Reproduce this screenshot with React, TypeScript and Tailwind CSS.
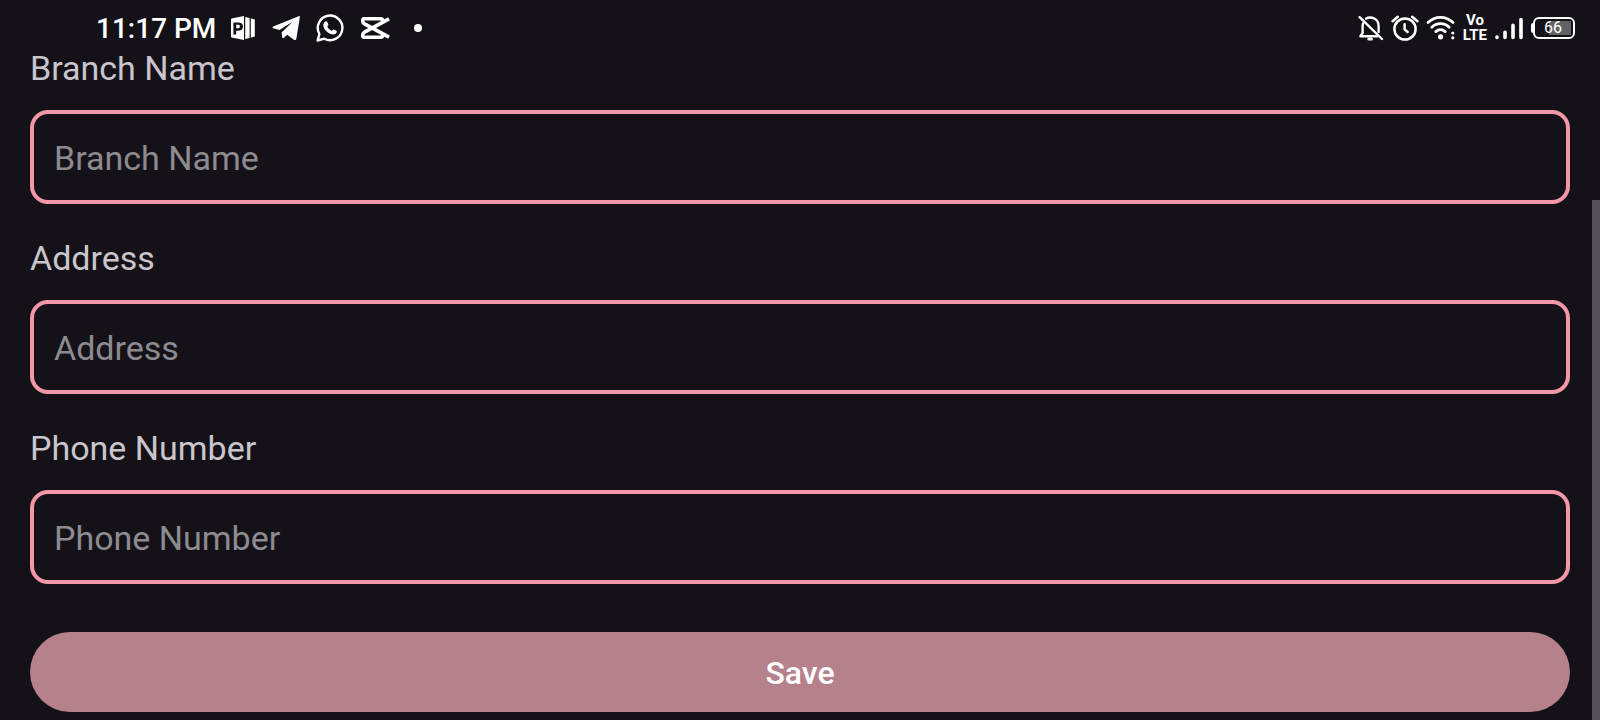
const FIELDS = [
  { id: "branch", label: "Branch Name", type: "text" },
  { id: "address", label: "Address", type: "text" },
  { id: "phone", label: "Phone Number", type: "tel" },
];

function PowerPointIcon() {
  return (
    <svg width="26" height="26" viewBox="0 0 26 26" fill="currentColor" aria-hidden="true">
      <path
        fillRule="evenodd"
        d="M1.6 3.4 L14 1 V25 L1.6 22.6 Q1 22.4 1 21.6 V4.4 Q1 3.6 1.6 3.4 Z M3.4 7.4 V19.4 H6.2 V15.8 H7.8 C11.2 15.8 13 14.2 13 11.4 C13 8.8 11.2 7.4 8.4 7.4 Z M6.2 9.8 H7.8 C9.2 9.8 9.9 10.4 9.9 11.5 C9.9 12.7 9.2 13.3 7.8 13.3 H6.2 Z"
      />
      <path d="M15.2 2 L19.6 3 V23 L15.2 24 Z M20.8 3.2 L24.8 4.6 V21.4 L20.8 22.8 Z" />
    </svg>
  );
}

function TelegramIcon() {
  return (
    <svg width="28" height="26" viewBox="0 0 28 26" fill="currentColor" aria-hidden="true">
      <path d="M1.2 11.4 L26.6 1.2 C27.6 0.9 28 1.4 27.8 2.4 L24.4 23.4 C24.1 25 23.2 25.4 21.9 24.7 L15.2 19.8 L12 22.8 C11.2 23.6 10.4 23.2 10.2 22.3 L9.6 17.4 L20.6 6.8 L7.4 15 L1.2 13.2 C0.2 12.8 0.2 11.9 1.2 11.4 Z" />
    </svg>
  );
}

function WhatsAppIcon() {
  return (
    <svg width="28" height="28" viewBox="0 0 28 28" aria-hidden="true">
      <path
        d="M1.6 26.5 L3.4 20 A12.3 12.3 0 1 1 8.2 24.7 Z"
        fill="none"
        stroke="currentColor"
        strokeWidth="2.4"
        strokeLinejoin="round"
      />
      <path
        fill="currentColor"
        d="M9.2 7.6 C9.8 7.1 10.9 7.1 11.3 8 L12.3 10.4 C12.6 11.2 11.5 12.2 11.2 12.6 C12.2 14.6 13.7 16 15.8 16.9 C16.3 16.5 17 15.3 17.7 15.5 L20.4 16.8 C21.2 17.2 20.7 19.1 19.7 19.8 C18.1 20.9 16.1 20.7 14.2 19.8 C11.3 18.5 9.2 16.4 7.9 13.7 C6.8 11.4 7.2 9.2 9.2 7.6 Z"
      />
    </svg>
  );
}

function CapCutIcon() {
  return (
    <svg
      width="30"
      height="24"
      viewBox="0 0 30 24"
      fill="none"
      stroke="currentColor"
      strokeWidth="3.6"
      strokeLinejoin="round"
      aria-hidden="true"
    >
      <path d="M29 2.8 L5 15.8 C3.2 16.8 2.8 17.4 2.8 18.6 V19.8 C2.8 20.8 3.2 21.2 4.2 21.2 H20.4 C22 21.2 22.8 20.6 22.8 19 V17.6" />
      <path d="M29 21.2 L5 8.2 C3.2 7.2 2.8 6.6 2.8 5.4 V4.2 C2.8 3.2 3.2 2.8 4.2 2.8 H20.4 C22 2.8 22.8 3.4 22.8 5 V6.4" />
    </svg>
  );
}

function BellOffIcon() {
  return (
    <svg
      width="26"
      height="26"
      viewBox="0 0 26 26"
      fill="none"
      stroke="currentColor"
      strokeWidth="2.4"
      strokeLinecap="round"
      strokeLinejoin="round"
      aria-hidden="true"
    >
      <path d="M1.6 2.2 L24 24" />
      <path d="M5 8.4 C4.6 9.6 4.6 10.4 4.6 12 V18 L2.4 21.2 H19.4" />
      <path d="M8 3.6 C13.4 0.8 20.6 3.8 20.6 11 V17" />
      <path d="M10.8 24 H13.4" strokeWidth="3" />
    </svg>
  );
}

function AlarmIcon() {
  return (
    <svg
      width="28"
      height="26"
      viewBox="0 0 28 26"
      fill="none"
      stroke="currentColor"
      strokeWidth="2.5"
      strokeLinecap="round"
      strokeLinejoin="round"
      aria-hidden="true"
    >
      <circle cx="14" cy="14" r="10.6" />
      <path d="M1.6 6.2 L6.8 1.8 M26.4 6.2 L21.2 1.8 M13.6 9.2 V14.4 L16.6 17" />
    </svg>
  );
}

function WifiIcon() {
  return (
    <svg
      width="30"
      height="26"
      viewBox="0 0 30 26"
      fill="none"
      stroke="currentColor"
      strokeWidth="2.8"
      strokeLinecap="round"
      aria-hidden="true"
    >
      <path d="M2 7.6 C9 0.6 20 0.6 27 7.6 M5.8 12.2 C10.6 7.4 18.4 7.4 23.2 12.2 M9.8 16.6 C12.6 14 16.4 14 19.2 16.6" />
      <g fill="currentColor" stroke="none">
        <circle cx="14.6" cy="21.8" r="2.6" />
        <circle cx="26.8" cy="18" r="1.6" />
        <circle cx="26.8" cy="22.8" r="1.6" />
      </g>
    </svg>
  );
}

function SignalIcon() {
  return (
    <svg
      width="30"
      height="24"
      viewBox="0 0 30 24"
      fill="none"
      stroke="currentColor"
      strokeWidth="3.6"
      strokeLinecap="round"
      aria-hidden="true"
    >
      <path d="M3 21 V21.4 M11 16.2 V21.4 M19 9.4 V21.4 M27 3.6 V21.4" />
    </svg>
  );
}

function Battery({ level }: { level: number }) {
  return (
    <div className="flex items-center" role="img" aria-label={`Battery ${level}%`}>
      <span className="h-2.5 w-0.5 rounded-l-sm bg-white" />
      <span className="flex h-[22px] w-[42px] rounded-md border-2 border-white p-0.5">
        <span className="flex flex-1 items-center justify-center bg-linear-to-r from-transparent from-34% to-[#626166] to-34% pr-0.5 text-base leading-none">
          {level}
        </span>
      </span>
    </div>
  );
}

function StatusBar() {
  return (
    <header className="relative z-10 flex h-14 items-center justify-between bg-[#141218] pl-24 pr-[25px] text-white">
      <div className="flex items-center">
        <time className="pt-0.5 text-[28px] font-medium leading-none">11:17 PM</time>
        <div className="ml-3.5 flex items-center gap-4">
          <PowerPointIcon />
          <TelegramIcon />
          <WhatsAppIcon />
          <CapCutIcon />
        </div>
        <span className="ml-6 size-2 rounded-full bg-white" />
      </div>
      <div className="flex items-center gap-[7px]">
        <BellOffIcon />
        <AlarmIcon />
        <WifiIcon />
        <div className="flex flex-col items-center text-[15px] font-bold leading-[15px]">
          <span>Vo</span>
          <span>LTE</span>
        </div>
        <SignalIcon />
        <Battery level={66} />
      </div>
    </header>
  );
}

export default function App() {
  return (
    <div className="flex min-h-screen flex-col bg-[#141218] font-['Roboto',sans-serif]">
      <StatusBar />
      <main className="flex flex-1">
        <form className="flex-1 pb-2 pl-[30px] pr-[22px]" onSubmit={(e) => e.preventDefault()}>
          <div className="flex flex-col gap-[42px]">
            {FIELDS.map((field) => (
              <div key={field.id} className="flex flex-col gap-[30px]">
                <label htmlFor={field.id} className="text-[34px] leading-6 text-[#cac5cd]">
                  {field.label}
                </label>
                <input
                  id={field.id}
                  type={field.type}
                  placeholder={field.label}
                  className="h-[94px] w-full rounded-[18px] border-4 border-[#f497a8] bg-transparent px-5 pt-0.5 text-[34px] text-[#e6e0e9] outline-none placeholder:text-[#8d8a90]"
                />
              </div>
            ))}
          </div>
          <button
            type="submit"
            className="mt-12 h-20 w-full rounded-full bg-[#b5818a] pt-0.5 text-[32px] font-medium text-white"
          >
            Save
          </button>
        </form>
        <div className="mt-36 w-2 bg-[#545258]" aria-hidden="true" />
      </main>
    </div>
  );
}
